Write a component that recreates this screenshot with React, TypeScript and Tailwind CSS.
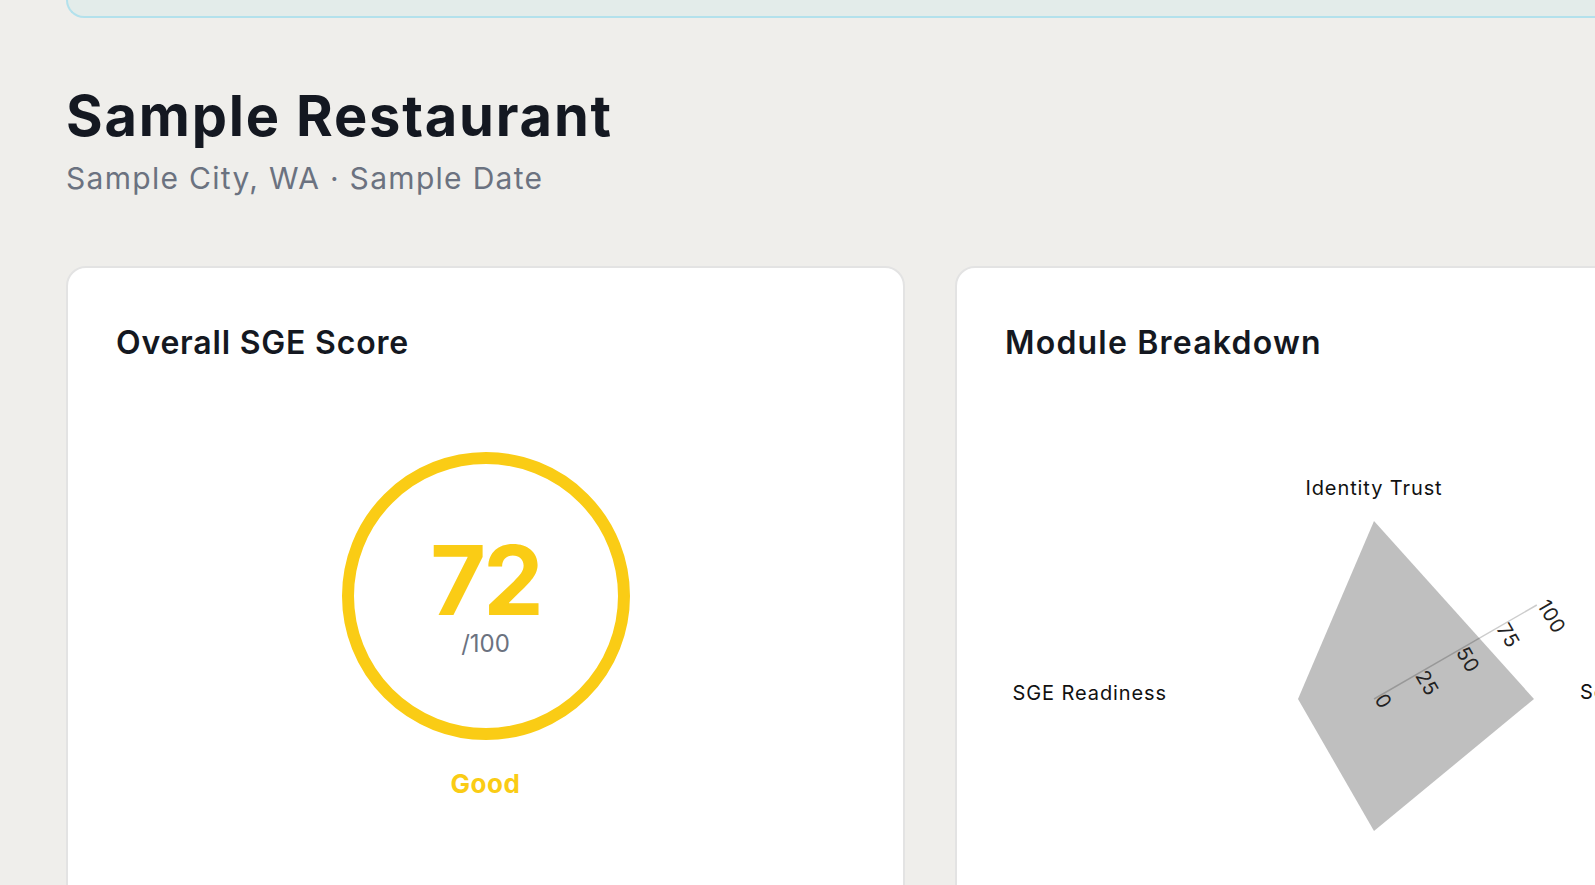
import React from "react";

const C = { cx: 369, cy: 319, R: 188 };

function pt(r: number, deg: number) {
  const a = (deg * Math.PI) / 180;
  return { x: C.cx + r * Math.cos(a), y: C.cy - r * Math.sin(a) };
}

function Radar() {
  const poly = [
    [C.cx, C.cy - 178],
    [C.cx + 160, C.cy],
    [C.cx, C.cy + 132],
    [C.cx - 76, C.cy],
  ]
    .map((p) => p.join(","))
    .join(" ");
  const end = pt(C.R, 30);
  const ticks = [0, 25, 50, 75, 100];
  return (
    <svg width="738" height="560" className="block" style={{ fontFamily: "Inter, sans-serif" }}>
      <polygon points={poly} fill="#bfbfbf" />
      <line x1={C.cx} y1={C.cy} x2={end.x} y2={end.y} stroke="rgba(0,0,0,0.2)" strokeWidth="1.5" />
      {ticks.map((t) => {
        const p = pt((t / 100) * C.R, 30);
        return (
          <text
            key={t}
            x={p.x}
            y={p.y}
            fontSize="20"
            letterSpacing="0.5"
            fill="#222"
            textAnchor="start"
            transform={`rotate(60 ${p.x} ${p.y})`}
          >
            {t}
          </text>
        );
      })}
      <text x={C.cx} y={115} fontSize="20" letterSpacing="0.9" fill="#111" textAnchor="middle">
        Identity Trust
      </text>
      <text x={162} y={320} fontSize="20" letterSpacing="0.9" fill="#111" textAnchor="end">
        SGE Readiness
      </text>
      <text x={575} y={319} fontSize="20" letterSpacing="0.9" fill="#111" textAnchor="start">
        Schema Signals
      </text>
      <text x={C.cx} y={545} fontSize="20" letterSpacing="0.9" fill="#111" textAnchor="middle">
        Review Health
      </text>
    </svg>
  );
}

export default function App() {
  return (
    <div className="w-[1595px] h-[885px] overflow-hidden bg-[#efeeeb] font-['Inter',sans-serif]">
      <div className="w-[2000px] pl-[66px]">
        <div className="h-[18px] rounded-bl-[18px] border-l-2 border-b-2 border-[#b3e1ec] bg-[#e3ecea]" />
        <h1 className="mt-[67px] text-[56px] leading-[62px] font-bold tracking-[1.8px] text-[#141821]">
          Sample Restaurant
        </h1>
        <p className="mt-[14px] text-[30px] leading-[35px] tracking-[1.3px] text-[#6b7280]">
          Sample City, WA · Sample Date
        </p>
        <div className="mt-[70px] flex gap-[50px]">
          <div className="w-[839px] h-[700px] shrink-0 rounded-[20px] border-2 border-[#e3e3e3] bg-white px-[48px] pt-[55px]">
            <h2 className="text-[32px] leading-[40px] font-semibold tracking-[0.8px] text-[#141821]">
              Overall SGE Score
            </h2>
            <div className="mt-[89px] flex flex-col items-center">
              <div className="w-[288px] h-[288px] rounded-full border-[12px] border-[#facc15] flex flex-col items-center justify-center">
                <div className="text-[96px] leading-[96px] font-bold tracking-[-3px] text-[#facc15]">72</div>
                <div className="text-[24px] leading-[32px] text-[#6b7280]">/100</div>
              </div>
              <div className="mt-[28px] text-[26px] leading-[32px] font-bold tracking-[0.5px] text-[#facc15]">Good</div>
            </div>
          </div>
          <div className="w-[839px] h-[700px] shrink-0 rounded-[20px] border-2 border-[#e3e3e3] bg-white px-[48px] pt-[55px]">
            <h2 className="text-[32px] leading-[40px] font-semibold tracking-[1.2px] text-[#141821]">
              Module Breakdown
            </h2>
            <div className="mt-[17px]">
              <Radar />
            </div>
          </div>
        </div>
      </div>
    </div>
  );
}
